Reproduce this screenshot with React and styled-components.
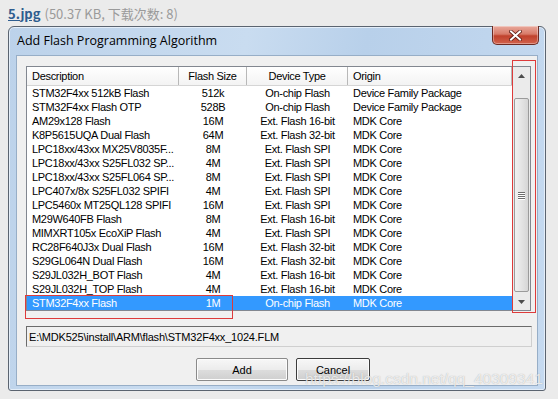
import React from 'react'
import styled, { createGlobalStyle } from 'styled-components'

const GlobalStyle = createGlobalStyle`
    body {
        margin: 0;
        background: #ebebeb;
        font-family: "Liberation Sans", Arial, sans-serif;
    }
`

const Page = styled.div`
    width: 558px;
    height: 399px;
    overflow: hidden;
    position: relative;
`
const FileLine = styled.div`
    height: 26px;
    padding-left: 8px;
    display: flex;
    align-items: center;
    font-family: "Noto Sans CJK SC", "Noto Sans", sans-serif;
    font-size: 13px;
    color: #9a9a9a;
    gap: 4px;
`
const FileLink = styled.a`
    color: #2e5d8f;
    font-weight: bold;
    text-decoration: underline;
`
const Window = styled.div`
    position: relative;
    margin-left: 8px;
    width: 538px;
    height: 365px;
    border: 1px solid #5b6470;
    border-radius: 6px 6px 3px 3px;
    background: linear-gradient(100deg, #bcd2ea 0%, #c9dcf0 40%, #b8d0ea 60%, #c6daf0 100%);
    display: flex;
    flex-direction: column;
    padding: 0 7px 4px 7px;
    box-sizing: border-box;
    box-shadow: inset 0 0 0 1px #e4eef9;
`
const TitleBar = styled.div`
    height: 28px;
    flex-shrink: 0;
    display: flex;
    justify-content: space-between;
    align-items: flex-start;
`
const Title = styled.div`
    font-family: "Open Sans", "Noto Sans", sans-serif;
    font-size: 12.5px;
    color: #000;
    padding-top: 5px;
    padding-left: 1px;
`
const CloseBtn = styled.div`
    width: 45px;
    height: 18px;
    margin-right: -1px;
    margin-top: -1px;
    border: 1px solid #6d2a22;
    border-top: none;
    border-radius: 0 0 5px 5px;
    background: linear-gradient(#e9a99c 0%, #d87a68 45%, #c0412c 55%, #d2624c 100%);
    display: flex;
    align-items: center;
    justify-content: center;
    box-shadow: inset 0 0 0 1px rgba(255,255,255,0.35);
`
const Client = styled.div`
    flex: 1;
    min-height: 0;
    background: #f0f0f0;
    border: 1px solid #97aec7;
    display: flex;
    flex-direction: column;
    padding: 10px 6px 0 9px;
    position: relative;
    & > * { flex-shrink: 0; }
`
const List = styled.div`
    height: 245px;
    box-sizing: border-box;
    border: 1px solid #828790;
    background: #fff;
    display: flex;
    font-size: 11px;
    letter-spacing: -0.3px;
`
const Table = styled.div`
    flex: 1;
    display: flex;
    flex-direction: column;
    overflow: hidden;
`
const Grid = styled.div`
    display: grid;
    grid-template-columns: 152px 68px 101px 1fr;
    height: ${p => p.$h}px;
    flex-shrink: 0;
    align-items: center;
    background: ${p => p.$selected ? '#3399ff' : 'transparent'};
    color: ${p => p.$selected ? '#fff' : '#000'};
`
const Header = styled(Grid)`
    background: linear-gradient(#ffffff, #f3f3f3);
    border-bottom: 1px solid #d5d5d5;
`
const HeadCell = styled.div`
    height: 100%;
    display: flex;
    align-items: center;
    justify-content: ${p => p.$center ? 'center' : 'flex-start'};
    padding-left: ${p => p.$center ? 0 : 5}px;
    border-right: 1px solid #b8b8b8;
    white-space: nowrap;
`
const Cell = styled.div`
    text-align: ${p => p.$center ? 'center' : 'left'};
    padding-left: ${p => p.$center ? 0 : 5}px;
    white-space: nowrap;
    overflow: hidden;
`
const Scrollbar = styled.div`
    width: 17px;
    background: #ebebeb;
    border-left: 1px solid #e0e0e0;
    display: flex;
    flex-direction: column;
`
const Arrow = styled.div`
    height: 17px;
    display: flex;
    align-items: center;
    justify-content: center;
`
const Track = styled.div`
    flex: 1;
    display: flex;
    flex-direction: column;
    padding: 14px 1px 1px 1px;
`
const Thumb = styled.div`
    flex: 1;
    border: 1px solid #9b9b9b;
    border-radius: 2px;
    background: linear-gradient(90deg, #f2f2f2, #e4e4e4 50%, #d6d6d6);
    display: flex;
    align-items: center;
    justify-content: center;
`
const Grip = styled.div`
    width: 7px;
    display: flex;
    flex-direction: column;
    gap: 1px;
    & > span {
        height: 1px;
        background: #6e6e6e;
        box-shadow: 0 1px 0 #fff;
    }
`
const PathField = styled.div`
    margin-top: 15px;
    margin-right: -1px;
    height: 21px;
    box-sizing: border-box;
    border: 1px solid #cfcfcf;
    border-top-color: #6b6b6b;
    border-left-color: #6b6b6b;
    background: #f0f0f0;
    font-size: 11px;
    letter-spacing: -0.2px;
    display: flex;
    align-items: center;
    padding-left: 2px;
`
const Buttons = styled.div`
    margin-top: 11px;
    display: flex;
    gap: 8px;
    padding-left: 170px;
`
const Button = styled.div`
    width: ${p => p.$w}px;
    height: 23px;
    box-sizing: border-box;
    border: 1px solid ${p => p.$focus ? '#3c3c3c' : '#8a8a8a'};
    border-radius: 2px;
    background: linear-gradient(#f7f7f7 0%, #ececec 50%, #dddddd 51%, #cfcfcf 100%);
    font-size: 11px;
    display: flex;
    align-items: center;
    justify-content: center;
    box-shadow: inset 0 0 0 1px #fcfcfc;
`
const Mark = styled.div`
    position: absolute;
    border: 1px solid #dd3b3b;
    pointer-events: none;
`
const Watermark = styled.div`
    position: absolute;
    left: 305px;
    top: 370px;
    font-family: "Liberation Sans", Arial, sans-serif;
    font-size: 15.5px;
    color: rgba(255,255,255,0.75);
    text-shadow: 0 0 1px rgba(120,120,120,0.6);
    pointer-events: none;
`

const rows = [
    ["STM32F4xx 512kB Flash", "512k", "On-chip Flash", "Device Family Package"],
    ["STM32F4xx Flash OTP", "528B", "On-chip Flash", "Device Family Package"],
    ["AM29x128 Flash", "16M", "Ext. Flash 16-bit", "MDK Core"],
    ["K8P5615UQA Dual Flash", "64M", "Ext. Flash 32-bit", "MDK Core"],
    ["LPC18xx/43xx MX25V8035F...", "8M", "Ext. Flash SPI", "MDK Core"],
    ["LPC18xx/43xx S25FL032 SP...", "4M", "Ext. Flash SPI", "MDK Core"],
    ["LPC18xx/43xx S25FL064 SP...", "8M", "Ext. Flash SPI", "MDK Core"],
    ["LPC407x/8x S25FL032 SPIFI", "4M", "Ext. Flash SPI", "MDK Core"],
    ["LPC5460x MT25QL128 SPIFI", "16M", "Ext. Flash SPI", "MDK Core"],
    ["M29W640FB Flash", "8M", "Ext. Flash 16-bit", "MDK Core"],
    ["MIMXRT105x EcoXiP Flash", "4M", "Ext. Flash SPI", "MDK Core"],
    ["RC28F640J3x Dual Flash", "16M", "Ext. Flash 32-bit", "MDK Core"],
    ["S29GL064N Dual Flash", "16M", "Ext. Flash 32-bit", "MDK Core"],
    ["S29JL032H_BOT Flash", "4M", "Ext. Flash 16-bit", "MDK Core"],
    ["S29JL032H_TOP Flash", "4M", "Ext. Flash 16-bit", "MDK Core"],
    ["STM32F4xx Flash", "1M", "On-chip Flash", "MDK Core"],
]

const App = () => {
    return (
        <Page>
            <GlobalStyle />
            <FileLine>
                <FileLink>5.jpg</FileLink>
                <span>(50.37 KB, 下载次数: 8)</span>
            </FileLine>
            <Window>
                <TitleBar>
                    <Title>Add Flash Programming Algorithm</Title>
                    <CloseBtn>
                        <svg width="13" height="11" viewBox="0 0 13 11">
                            <path d="M2 1.5 L11 9.5 M11 1.5 L2 9.5" stroke="#5a1a12" strokeWidth="3.6" strokeLinecap="square" />
                            <path d="M2 1.5 L11 9.5 M11 1.5 L2 9.5" stroke="#fff" strokeWidth="2" strokeLinecap="square" />
                        </svg>
                    </CloseBtn>
                </TitleBar>
                <Client>
                    <List>
                        <Table>
                            <Header $h={18}>
                                <HeadCell>Description</HeadCell>
                                <HeadCell $center>Flash Size</HeadCell>
                                <HeadCell $center>Device Type</HeadCell>
                                <HeadCell>Origin</HeadCell>
                            </Header>
                            {rows.map((r, i) => (
                                <Grid key={i} $h={14} $selected={i === rows.length - 1}>
                                    <Cell>{r[0]}</Cell>
                                    <Cell $center>{r[1]}</Cell>
                                    <Cell $center>{r[2]}</Cell>
                                    <Cell>{r[3]}</Cell>
                                </Grid>
                            ))}
                        </Table>
                        <Scrollbar>
                            <Arrow>
                                <svg width="7" height="4"><path d="M0 4 L3.5 0 L7 4 Z" fill="#4d4d4d" /></svg>
                            </Arrow>
                            <Track>
                                <Thumb>
                                    <Grip><span /><span /><span /><span /></Grip>
                                </Thumb>
                            </Track>
                            <Arrow>
                                <svg width="7" height="4"><path d="M0 0 L3.5 4 L7 0 Z" fill="#4d4d4d" /></svg>
                            </Arrow>
                        </Scrollbar>
                    </List>
                    <PathField>E:\MDK525\install\ARM\flash\STM32F4xx_1024.FLM</PathField>
                    <Buttons>
                        <Button $w={92}>Add</Button>
                        <Button $w={74} $focus>Cancel</Button>
                    </Buttons>
                    <Mark style={{ left: 8, top: 239, width: 206, height: 22 }} />
                    <Mark style={{ left: 495, top: 4, width: 22, height: 251 }} />
                </Client>
            </Window>
            <Watermark>https://blog.csdn.net/qq_40309341</Watermark>
        </Page>
    )
}

export default App
